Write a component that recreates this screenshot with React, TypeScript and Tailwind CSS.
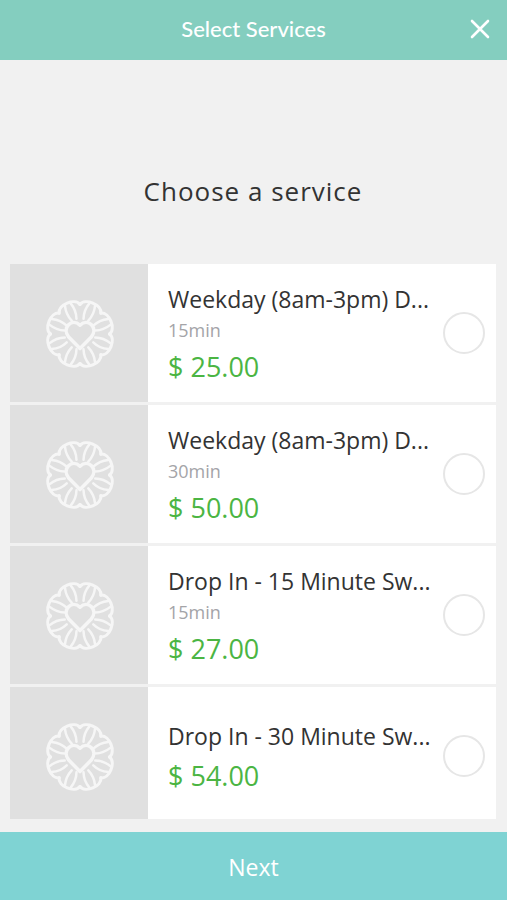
import React, { useState } from "react";

type Service = { id: string; name: string; duration?: string; price: string };

const services: Service[] = [
  { id: "weekday-15", name: "Weekday (8am-3pm) D...", duration: "15min", price: "$ 25.00" },
  { id: "weekday-30", name: "Weekday (8am-3pm) D...", duration: "30min", price: "$ 50.00" },
  { id: "drop-in-15", name: "Drop In - 15 Minute Sw...", duration: "15min", price: "$ 27.00" },
  { id: "drop-in-30", name: "Drop In - 30 Minute Sw...", price: "$ 54.00" },
];

const petals = [22.5, 67.5, 112.5, 157.5, 202.5, 247.5, 292.5, 337.5];

function Flower() {
  return (
    <svg viewBox="-35 -35 70 70" className="size-[72px]" fill="none" stroke="#f6f6f6" strokeWidth="3" strokeLinejoin="round" strokeLinecap="round" aria-hidden="true">
      {petals.map((angle) => (
        <g key={angle} transform={`rotate(${angle})`}>
          <path d="M-11 -26.500 C-9 -34.500 9 -34.500 11 -26.500" />
          <path d="M-2.500 -15 C-4.500 -20 -4.500 -26 -3 -31" strokeWidth="2.4" />
          <path d="M2.500 -15 C4.500 -20 4.500 -26 3 -31" strokeWidth="2.4" />
        </g>
      ))}
      <path fill="#e0e0e0" strokeWidth="3.4" d="M0 14 L-11 3 C-18 -6 -8 -16 0 -8.500 C8 -16 18 -6 11 3 Z" />
    </svg>
  );
}

export default function App() {
  const [selected, setSelected] = useState<string | null>(null);
  return (
    <div className="flex h-screen flex-col bg-[#f1f1f1] font-['Open_Sans','Noto_Sans',sans-serif] text-[#333]">
      <header className="grid h-[60px] shrink-0 grid-cols-[44px_1fr_44px] items-center bg-[#84cebf] px-[5px] pb-[3px] text-white">
        <h1 className="col-start-2 text-center font-['Lato',sans-serif] text-[22px] leading-8 font-medium">Select Services</h1>
        <button type="button" aria-label="Close" className="flex h-11 items-center justify-center">
          <svg viewBox="0 0 20 20" className="size-5" stroke="currentColor" strokeWidth="2.6" strokeLinecap="round" aria-hidden="true">
            <path d="M2 2L18 18M18 2L2 18" />
          </svg>
        </button>
      </header>
      <main className="flex min-h-0 flex-1 flex-col pr-[11px] pb-[13px] pl-[10px]">
        <h2 className="flex h-[204px] shrink-0 items-center justify-center pt-[58px] text-[26px] tracking-[1px]">Choose a service</h2>
        <div className="flex min-h-0 flex-1 flex-col gap-[3px] overflow-y-auto [scrollbar-width:none]">
          {services.map((s) => (
            <label key={s.id} htmlFor={s.id} className="flex h-[138px] shrink-0 items-center bg-white pr-[11px]">
              <span className="flex h-full w-[138px] shrink-0 items-center justify-center bg-[#e0e0e0] pt-[2px] pl-[2px]">
                <Flower />
              </span>
              <span className="flex min-w-0 flex-1 flex-col pt-1.5 pl-5">
                <span className="truncate text-[23px] leading-[34px]">{s.name}</span>
                {s.duration && <span className="text-[18px] leading-7 text-[#a4a4a8]">{s.duration}</span>}
                <span className="text-[27px] leading-[46px] text-[#4bb543]">{s.price}</span>
              </span>
              <input
                id={s.id}
                type="radio"
                name="service"
                checked={selected === s.id}
                onChange={() => setSelected(s.id)}
                className="size-[42px] shrink-0 appearance-none rounded-full border-2 border-[#e6e6e6] bg-white checked:border-[#7fd3d3] checked:bg-[#7fd3d3]"
              />
            </label>
          ))}
        </div>
      </main>
      <button type="button" className="h-[68px] shrink-0 bg-[#7fd3d3] pt-[2px] text-[23px] text-white">Next</button>
    </div>
  );
}
